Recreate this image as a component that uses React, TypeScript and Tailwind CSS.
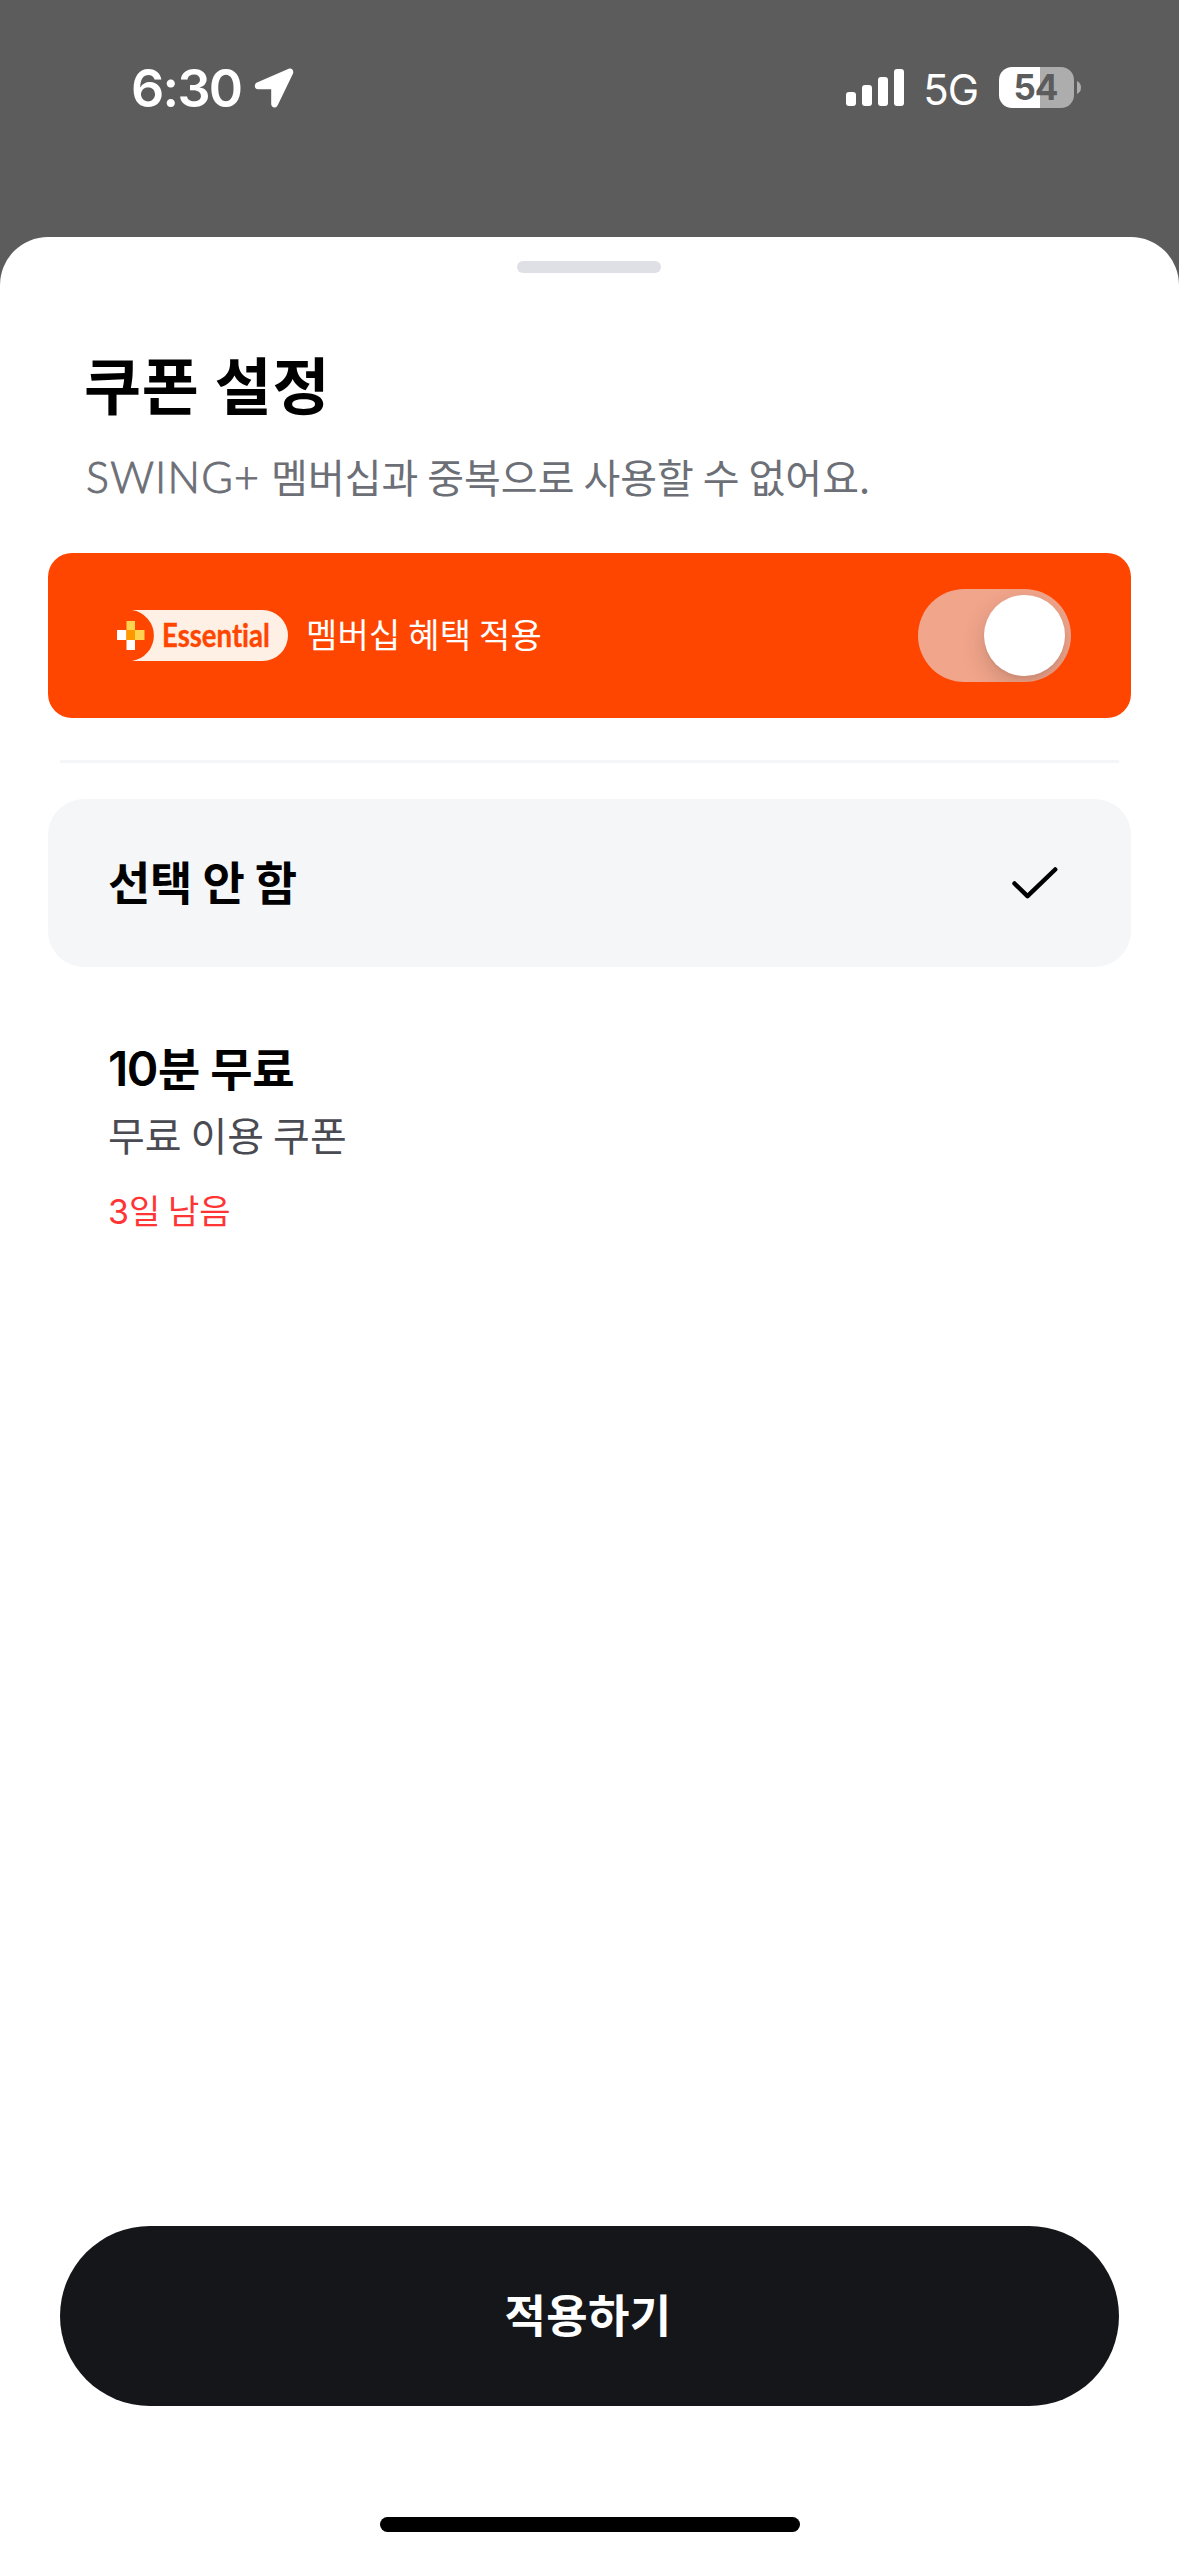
import { useState } from "react";

function LocationArrow() {
  return (
    <svg className="ml-[13px] h-[42px] w-[42px]" viewBox="0 0 42 42" fill="#fff">
      <path d="M34.700 1.800 3 15.600C-.4 17.100.3 22.200 4 22.200H17.200V37C17.200 40.900 22 41.800 23.700 38.200L38.800 7C40.400 3.700 37.800.5 34.700 1.800Z" />
    </svg>
  );
}

function SignalBars() {
  return (
    <div className="flex h-[37px] items-end gap-[6px]">
      <div className="h-[14px] w-[10px] rounded-[3px] bg-white" />
      <div className="h-[21px] w-[10px] rounded-[3px] bg-white" />
      <div className="h-[29px] w-[10px] rounded-[3px] bg-white" />
      <div className="h-[37px] w-[10px] rounded-[3px] bg-white" />
    </div>
  );
}

function Battery() {
  return (
    <div className="flex items-center gap-[3px]">
      <div className="flex h-[41px] w-[75px] items-center justify-center rounded-[13px] bg-[linear-gradient(to_right,#fff_41px,#adadad_41px)] pr-[2px] font-[Inter] text-[35px] leading-none font-bold tracking-[-1px] text-[#5c5c5c]">
        54
      </div>
      <svg className="h-[13px] w-[4px]" viewBox="0 0 4 13" fill="#adadad">
        <path d="M0 0Q4 2 4 6.500T0 13Z" />
      </svg>
    </div>
  );
}

function StatusBar() {
  return (
    <header className="flex h-[237px] items-start justify-between pt-[67px] pr-[98px] pl-[131px] text-white">
      <div className="flex h-[42px] items-center">
        <span className="pt-[2px] font-[Inter] text-[52px] leading-[42px] font-semibold tracking-[-1.700px]">6:30</span>
        <LocationArrow />
      </div>
      <div className="flex h-[41px] items-center">
        <SignalBars />
        <span className="mr-[21px] ml-[19px] pt-[3px] font-[Inter] text-[42px] leading-[41px] tracking-[-1px]">5G</span>
        <Battery />
      </div>
    </header>
  );
}

function EssentialBadge() {
  return (
    <svg className="h-[51px] w-[172px] shrink-0" viewBox="0 0 172 51">
      <path d="M16 0H146.500a25.500 25.500 0 0 1 0 51H16A25.800 25.800 0 0 0 16 0Z" fill="#fff0e5" />
      <path d="M10.500 11h8.500v9h-8.500z" fill="#ffd250" />
      <path d="M1 20h9.500v10h-9.500z" fill="#fff" />
      <path d="M10.500 20h8.500v10h-8.500z" fill="#ff9900" />
      <path d="M19 20h9.500v10h-9.500z" fill="#ffd250" />
      <path d="M10.500 30h8.500v10h-8.500z" fill="#fff" />
      <text
        transform="translate(46 37) scale(0.835 1)"
        fill="#ff4600"
        stroke="#ff4600"
        strokeWidth="0.400"
        className="font-[Lato] text-[33px] font-bold [font-variant-ligatures:none]"
      >
        Essential
      </text>
    </svg>
  );
}

function Toggle({ on, onChange }: { on: boolean; onChange: () => void }) {
  return (
    <button
      role="switch"
      aria-checked={on}
      onClick={onChange}
      className={`flex h-[93px] w-[153px] items-center overflow-hidden rounded-full bg-[#f1a58b] px-[6px] ${on ? "justify-end" : "justify-start"}`}
    >
      <span className="h-[81px] w-[81px] rounded-full bg-white shadow-[0_9px_24px_rgba(0,0,0,0.16),0_3px_3px_rgba(0,0,0,0.04)]" />
    </button>
  );
}

export default function App() {
  const [benefit, setBenefit] = useState(true);
  return (
    <div className="h-[2556px] w-[1179px] overflow-hidden bg-[#5c5c5c] font-['Noto_Sans_CJK_KR',sans-serif] whitespace-nowrap">
      <StatusBar />
      <main className="flex h-[2319px] flex-col items-center rounded-t-[48px] bg-white pt-6">
        <div className="mr-px h-3 w-[144px] shrink-0 rounded-full bg-[#dfe0e6]" />

        <div className="mt-[65px] w-full pl-[84px]">
          <h1 className="h-[90px] text-[62px] leading-[90px] font-bold tracking-[0.800px] text-black">쿠폰 설정</h1>
          <p className="mt-[18px] flex h-[60px] items-baseline text-[40px] leading-[60px] text-[#6d6f77]">
            <span className="mr-[11px] ml-[2px] font-[Lato] text-[43px] leading-[60px] font-light tracking-[1.200px] [-webkit-text-stroke:0.900px_#6d6f77]">
              SWING+
            </span>
            멤버십과 중복으로 사용할 수 없어요.
          </p>
        </div>

        <section className="mt-[47px] flex h-[165px] w-[1083px] shrink-0 items-center rounded-[24px] bg-[#ff4600] pr-[60px] pl-[68px]">
          <EssentialBadge />
          <span className="ml-[18px] flex-1 pb-[3px] text-[34px] leading-[50px] tracking-[0.200px] text-white">멤버십 혜택 적용</span>
          <Toggle on={benefit} onChange={() => setBenefit(!benefit)} />
        </section>

        <hr className="mt-[42px] h-[3px] w-[1059px] shrink-0 border-0 bg-[#f5f6f8]" />

        <section className="mt-9 flex h-[168px] w-[1083px] shrink-0 items-center justify-between rounded-[36px] bg-[#f5f6f8] pr-[72px] pl-[60px]">
          <span className="pb-[6px] text-[46px] leading-[66px] font-bold tracking-[-0.200px] text-black">선택 안 함</span>
          <svg className="h-[32px] w-[48px]" viewBox="0 0 48 32" fill="none" stroke="#000" strokeWidth="4.500" strokeLinecap="round" strokeLinejoin="round">
            <path d="M3.500 16.500 16.500 29.200 44.200 2.500" />
          </svg>
        </section>

        <section className="mt-[66px] flex w-full flex-col pl-[108px]">
          <h2 className="flex h-[66px] items-baseline text-[46px] leading-[66px] font-bold tracking-[-0.300px] text-black">
            <span className="w-[50px] font-[Inter] text-[48px] leading-[66px] font-semibold tracking-[-1.500px]">10</span>분 무료
          </h2>
          <p className="mt-[5px] h-[60px] text-[40px] leading-[60px] text-[#4a4b52]">무료 이용 쿠폰</p>
          <p className="mt-[21px] flex h-[50px] items-baseline text-[34px] leading-[50px] text-[#ff3434]">
            <span className="w-[21px] font-[Inter] text-[34px] leading-[50px]">3</span>일 남음
          </p>
        </section>

        <button className="mt-auto h-[180px] w-[1059px] shrink-0 rounded-full bg-[#15161a] pr-[9px] pb-[5px] pl-[6px] text-[45px] leading-[66px] font-bold tracking-[0.300px] text-white">
          적용하기
        </button>
        <div className="mt-[111px] mb-6 h-[15px] w-[420px] shrink-0 rounded-full bg-black" />
      </main>
    </div>
  );
}
